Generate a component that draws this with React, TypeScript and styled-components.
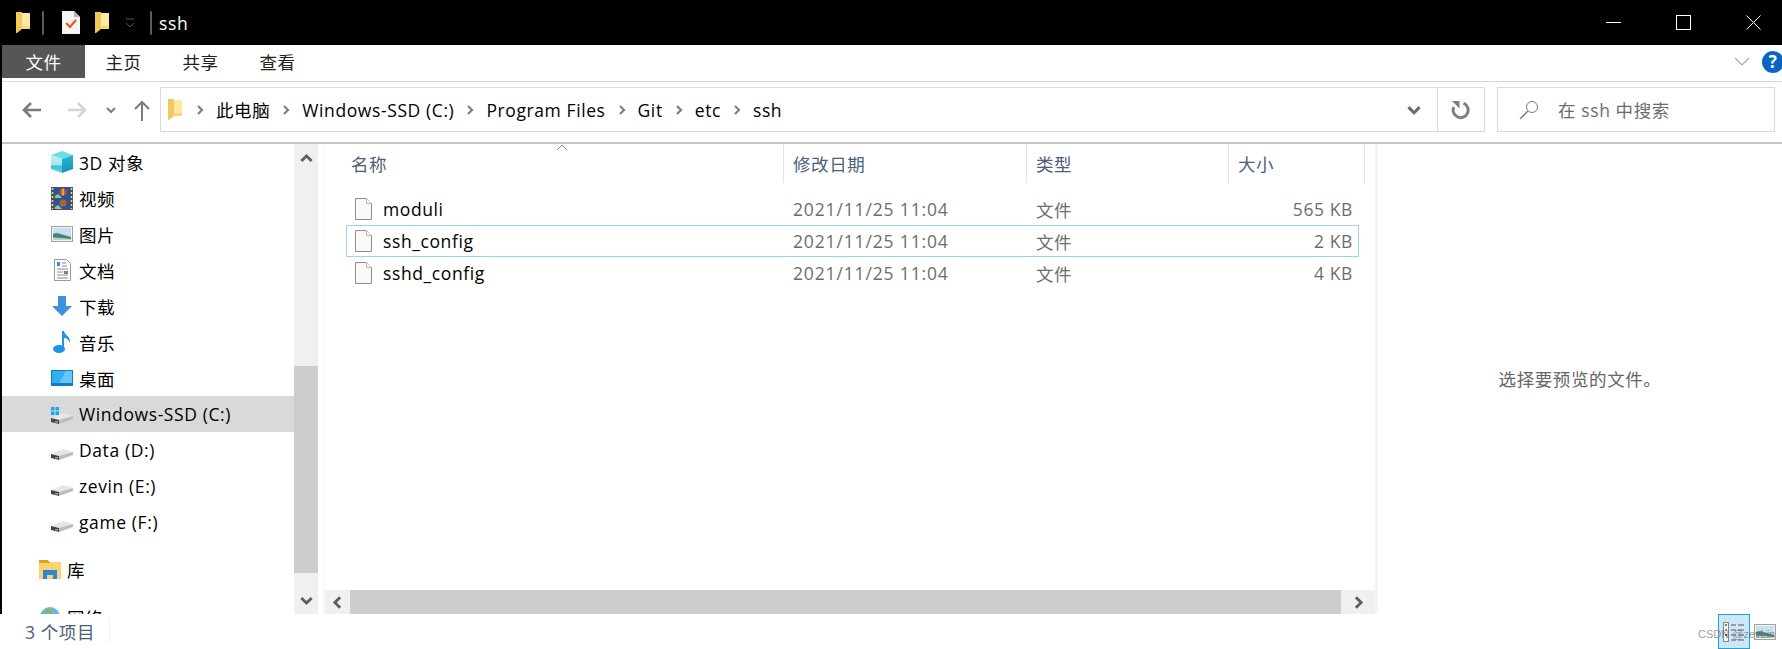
import styled, { createGlobalStyle } from "styled-components";

const GlobalStyle = createGlobalStyle`
  html, body {
    margin: 0;
    padding: 0;
    background: #fff;
    overflow: hidden;
  }
  * {
    box-sizing: border-box;
  }
`;

const Window = styled.div`
  position: relative;
  display: flex;
  flex-direction: column;
  width: 1782px;
  height: 649px;
  overflow: hidden;
  background: #fff;
  color: #000;
  font-family: "Open Sans", "Noto Sans CJK SC", sans-serif;
  font-size: 17.5px;
  letter-spacing: 0.6px;
`;

const TitleBar = styled.div`
  display: flex;
  align-items: center;
  flex: 0 0 45px;
  padding: 0 21px 0 16px;
  background: #000;
  color: #fff;
`;
const QuickAccess = styled.div`
  display: flex;
  align-items: center;
  gap: 8px;
`;
const QuickItem = styled.span<{ $mr: number }>`
  display: flex;
  margin-right: ${(p) => p.$mr}px;
`;
const TitleSep = styled.span<{ $m?: string }>`
  width: 2px;
  height: 24px;
  border-radius: 1px;
  background: #5c5c5c;
  margin: ${(p) => p.$m || "0"};
`;
const TitleText = styled.span`
  margin-left: 7px;
`;
const QuickDropdown = styled.svg`
  margin-left: 6px;
`;
const WindowControls = styled.div`
  display: flex;
  align-items: center;
  gap: 55px;
  margin-left: auto;
`;

const Framed = styled.div`
  display: flex;
  flex-direction: column;
  flex: 1;
  min-height: 0;
  border-left: 2px solid #000;
`;

const RibbonTabs = styled.div`
  display: flex;
  flex: 0 0 37px;
  border-bottom: 1px solid #dadada;
  padding-bottom: 3px;
`;
const Tab = styled.div<{ $file?: boolean }>`
  display: flex;
  align-items: center;
  justify-content: center;
  width: ${(p) => (p.$file ? "83px" : "77px")};
  color: ${(p) => (p.$file ? "#fff" : "#222")};
  background: ${(p) => (p.$file ? "#565656" : "transparent")};
`;
const RibbonEnd = styled.div`
  display: flex;
  align-items: center;
  gap: 12px;
  margin-left: auto;
  margin-right: -2px;
`;

const AddressRow = styled.div`
  display: flex;
  align-items: center;
  flex: 0 0 61px;
  padding: 5px 7px 10px 0;
  border-bottom: 2px solid #c4c4c4;
`;
const NavButtons = styled.div`
  display: flex;
  align-items: center;
  width: 158px;
  padding-left: 19px;
`;
const Spacer = styled.span<{ $w: number }>`
  flex: 0 0 ${(p) => p.$w}px;
`;
const NavArrow = styled.svg<{ $flip?: boolean }>`
  transform: ${(p) => (p.$flip ? "scaleX(-1)" : "none")};
`;
const AddressBox = styled.div`
  display: flex;
  align-items: center;
  width: 1325px;
  height: 45px;
  padding-left: 7px;
  border: 1px solid #d9d9d9;
`;
const Crumbs = styled.div`
  display: flex;
  align-items: center;
  gap: 11px;
  margin-left: 12px;
`;
const Crumb = styled.span`
  display: flex;
  align-items: center;
  gap: 11px;
`;
const AddressTools = styled.div`
  display: flex;
  align-items: center;
  align-self: stretch;
  margin-left: auto;
`;
const ToolCell = styled.div<{ $w: number; $border?: boolean }>`
  display: flex;
  align-items: center;
  justify-content: center;
  width: ${(p) => p.$w}px;
  height: 100%;
  border-left: ${(p) => (p.$border ? "1px solid #d9d9d9" : "none")};
`;
const SearchBox = styled.div`
  display: flex;
  align-items: center;
  gap: 19px;
  width: 278px;
  height: 45px;
  margin-left: 12px;
  padding-left: 21px;
  border: 1px solid #d9d9d9;
  color: #6d6d6d;
`;

const Main = styled.div`
  display: flex;
  flex: 1;
  min-height: 0;
`;

const Sidebar = styled.div`
  flex: 0 0 292px;
  overflow: hidden;
`;
const NavRow = styled.div<{ $selected?: boolean; $top?: boolean; $gap?: number }>`
  display: flex;
  align-items: center;
  gap: 6px;
  height: 36px;
  margin-top: ${(p) => p.$gap || 0}px;
  padding-left: ${(p) => (p.$top ? "37px" : "49px")};
  background: ${(p) => (p.$selected ? "#d9d9d9" : "transparent")};
`;
const IconSlot = styled.span`
  display: flex;
  align-items: center;
  justify-content: center;
  flex: 0 0 22px;
`;

const VScroll = styled.div`
  display: flex;
  flex-direction: column;
  flex: 0 0 24px;
  background: #f0f0f0;
`;
const ScrollEnd = styled.div`
  display: flex;
  align-items: center;
  justify-content: center;
  flex: 0 0 28px;
`;
const VTrack = styled.div`
  flex: 1;
  padding: 194px 0 13px;
`;
const Thumb = styled.div`
  height: 100%;
  background: #cdcdcd;
`;

const ListPane = styled.div`
  display: flex;
  flex-direction: column;
  width: 1056px;
  margin-left: 4px;
  border-left: 3px solid #fafafa;
  border-right: 3px solid #f5f5f5;
`;
const HeaderRow = styled.div`
  display: grid;
  grid-template-columns: 438px 243px 202px 136px;
  flex: 0 0 39px;
  margin-left: 21px;
  margin-bottom: 10px;
  color: #4c607a;
`;
const HeaderCell = styled.div<{ $pad: number }>`
  position: relative;
  display: flex;
  align-items: center;
  padding-left: ${(p) => p.$pad}px;
  border-right: 1px solid #e5e5e5;
`;
const SortArrow = styled.svg`
  position: absolute;
  left: 210px;
  top: 0;
`;
const FileRow = styled.div<{ $selected?: boolean }>`
  display: grid;
  grid-template-columns: 437px 243px 202px 129px;
  align-items: center;
  flex: 0 0 32px;
  width: 1013px;
  margin-left: 21px;
  border: 1px solid ${(p) => (p.$selected ? "#99d1ff" : "transparent")};
  color: #6d6d6d;
`;
const NameCell = styled.div`
  display: flex;
  align-items: center;
  gap: 11px;
  padding-left: 8px;
  color: #000;
`;
const TextCell = styled.div`
  padding-left: 9px;
`;
const DateCell = styled(TextCell)`
  letter-spacing: 0.85px;
`;
const SizeCell = styled.div`
  padding-right: 5px;
  text-align: right;
`;
const HScroll = styled.div`
  display: flex;
  align-items: stretch;
  flex: 0 0 24px;
  margin-top: auto;
  background: #f0f0f0;
`;
const HButton = styled.div<{ $w: number }>`
  display: flex;
  align-items: center;
  justify-content: center;
  flex: 0 0 ${(p) => p.$w}px;
`;
const HThumb = styled.div`
  flex: 1;
  background: #cdcdcd;
`;
const Preview = styled.div`
  display: flex;
  flex: 1;
  align-items: center;
  justify-content: center;
  padding-bottom: 2px;
  color: #666;
`;

const StatusBar = styled.div`
  display: flex;
  align-items: center;
  flex: 0 0 35px;
  padding-left: 25px;
  color: #4c607a;
`;
const StatusCount = styled.span`
  width: 85px;
  border-right: 1px solid #f0f0f0;
`;
const ViewButtons = styled.div`
  display: flex;
  align-items: center;
  gap: 4px;
  margin-left: auto;
  padding-right: 6px;
  height: 100%;
`;
const ViewButton = styled.div<{ $active?: boolean }>`
  display: flex;
  align-items: center;
  justify-content: center;
  width: ${(p) => (p.$active ? "32px" : "22px")};
  height: 100%;
  background: ${(p) => (p.$active ? "#cce8f7" : "transparent")};
  border: ${(p) => (p.$active ? "1px solid #26a0da" : "none")};
`;
const Watermark = styled.div`
  position: absolute;
  left: 1698px;
  top: 628px;
  color: rgba(110, 110, 110, 0.7);
  font-family: "Liberation Sans", sans-serif;
  font-size: 11px;
  letter-spacing: 0;
  white-space: nowrap;
`;

const Folder = () => (
  <svg width="15" height="22" viewBox="0 0 15 22">
    <path d="M5 1h9v16H5z" fill="#fde8a4" />
    <path d="M5 14h9v3H5z" fill="#f8d67c" />
    <path d="M0 0h6v17l-5 4H0z" fill="#f5c65a" />
  </svg>
);
const TaskDoc = () => (
  <svg width="18" height="23" viewBox="0 0 18 23">
    <path d="M0 0h12l6 6v17H0z" fill="#f5f5f5" />
    <path d="M12 0l6 6h-6z" fill="#b5b5b5" />
    <path d="M4 12l4 4 6-7" fill="none" stroke="#e8561e" strokeWidth="2.200" />
  </svg>
);
const chevrons: Record<string, string> = {
  right: "M3 1l4 4-4 4",
  left: "M7 1L3 5l4 4",
  down: "M1 3l4 4 4-4",
  up: "M1 7l4-4 4 4",
};
const Chevron = ({ dir = "right", color = "#808080", size = 10 }: { dir?: string; color?: string; size?: number }) => (
  <svg width={size} height={size} viewBox="0 0 10 10">
    <path d={chevrons[dir]} fill="none" stroke={color} strokeWidth="2.200" />
  </svg>
);
const Arrow = ({ color, flip }: { color: string; flip?: boolean }) => (
  <NavArrow $flip={flip} width="20" height="18" viewBox="0 0 20 18">
    <path d="M20 9H3M10 2L3 9l7 7" fill="none" stroke={color} strokeWidth="2.600" />
  </NavArrow>
);
const FileIcon = () => (
  <svg width="17" height="22" viewBox="0 0 17 22">
    <path d="M.5.5h11l5 5v16H.5z" fill="#f9f9f9" stroke="#8f8f8f" />
    <path d="M11.500.5v5h5" fill="#fff" stroke="#b5b5b5" />
  </svg>
);
const Cube = () => (
  <svg width="22" height="22" viewBox="0 0 22 22">
    <defs>
      <linearGradient id="cubeLeft" x1="0" y1="0" x2="0" y2="1">
        <stop offset="0" stopColor="#c4f0f2" />
        <stop offset="0.55" stopColor="#a5e6ea" />
        <stop offset="0.6" stopColor="#45c0d0" />
        <stop offset="1" stopColor="#5fcfdc" />
      </linearGradient>
      <linearGradient id="cubeRight" x1="0" y1="0" x2="0" y2="1">
        <stop offset="0" stopColor="#28b4d4" />
        <stop offset="1" stopColor="#1493bd" />
      </linearGradient>
    </defs>
    <path d="M11 0l11 4-11 4L0 4z" fill="#6fdde6" />
    <path d="M0 4l11 4v14L0 18z" fill="url(#cubeLeft)" />
    <path d="M11 8l11-4v14l-11 4z" fill="url(#cubeRight)" />
  </svg>
);
const Film = () => (
  <svg width="22" height="23" viewBox="0 0 22 23">
    <rect width="22" height="23" fill="#4e4e4e" />
    <rect x="4" y="1" width="14" height="10" fill="#1f55b0" />
    <rect x="4" y="12" width="14" height="10" fill="#1f55b0" />
    <circle cx="12" cy="5" r="3.500" fill="#d8502a" />
    <path d="M12 1.500v7" stroke="#e8c030" strokeWidth="1.500" />
    <circle cx="12" cy="16" r="3.500" fill="#d8502a" />
    <path d="M12 12.500v7" stroke="#3c9a4c" strokeWidth="1.500" />
    <path d="M4 9l3-2 4 4H4zM4 20l3-2 4 4H4z" fill="#9ec87a" />
    <path d="M1.500 1v21M20.500 1v21" stroke="#d8d8d8" strokeWidth="1.500" strokeDasharray="2 2" />
  </svg>
);
const Picture = () => (
  <svg width="22" height="16" viewBox="0 0 22 16">
    <rect x=".5" y=".5" width="21" height="15" fill="#f4f4f4" stroke="#a0a0a0" />
    <rect x="2" y="2" width="18" height="12" fill="#c4dfee" />
    <path d="M2 8c4-2 9 1 18 3v3H2z" fill="#4f7f73" />
    <path d="M2 11.500c6 0 12 1 18 1.500v1H2z" fill="#b4d2e0" />
  </svg>
);
const DocIcon = () => (
  <svg width="17" height="22" viewBox="0 0 17 22">
    <path d="M.5.5h12l4 4v17H.5z" fill="#fff" stroke="#999" />
    <path d="M8 4h4M8 7h5M3 10h11M3 13h6M3 16h11M3 19h11" stroke="#8c8c8c" />
    <rect x="10" y="12" width="4" height="3" fill="#5a8fa8" />
    <path d="M3 3h3v4H3z" fill="#2f8fe0" />
  </svg>
);
const Download = () => (
  <svg width="20" height="20" viewBox="0 0 20 20">
    <path d="M6 0h8v10h6l-10 10L0 10h6z" fill="#3e90e0" />
  </svg>
);
const Music = () => (
  <svg width="18" height="22" viewBox="0 0 18 22">
    <ellipse cx="6" cy="18" rx="6" ry="4" fill="#1e96e8" />
    <path d="M9 0h2c1 5 7 5 6 12-1-3-3-5-6-5v11H9z" fill="#1e96e8" />
  </svg>
);
const Desktop = () => (
  <svg width="22" height="16" viewBox="0 0 22 16">
    <rect width="22" height="16" fill="#0f7dc2" />
    <path d="M1 1h20v12H1z" fill="#2fb0f4" />
    <path d="M15 1h6v12H8z" fill="#63c7f8" />
  </svg>
);
const Drive = ({ win }: { win?: boolean }) => (
  <svg width="22" height="22" viewBox="0 0 22 22">
    {win && <path d="M0 4h3.500v3.500H0zM4.500 4H8v3.500H4.500zM0 8.500h3.500V12H0zM4.500 8.500H8V12H4.500z" fill="#17a5e6" />}
    <path d="M0 15l12-5 10 3-14 4z" fill="#e6e6e6" />
    <path d="M8 17l14-4v3L8 21z" fill="#bdbdbd" />
    <path d="M0 15l8 2v4l-8-2z" fill="#454545" />
    <rect x="4" y="18" width="3" height="1.500" fill="#5ec46a" />
  </svg>
);
const Library = () => (
  <svg width="22" height="19" viewBox="0 0 22 19">
    <path d="M0 2h22v17H0z" fill="#fbd46f" />
    <path d="M0 0h9l2 3H0z" fill="#e0a21c" />
    <path d="M4 10h14v9h-4v-4H8v4H4z" fill="#2b88d8" />
  </svg>
);
const Globe = () => (
  <svg width="22" height="22" viewBox="0 0 22 22">
    <circle cx="11" cy="11" r="10" fill="#6fb4e8" />
    <path d="M6 4c3-2 7-2 8 0l-2 4-5 1zM13 12l5-1-2 6-3 1z" fill="#7fb86a" />
  </svg>
);
const Help = () => (
  <svg width="22" height="22" viewBox="0 0 22 22">
    <circle cx="11" cy="11" r="11" fill="#0a64c4" />
    <text x="11" y="17" textAnchor="middle" fontSize="17" fontWeight="700" fontFamily="Open Sans" fill="#fff">?</text>
  </svg>
);
const DetailsIcon = () => (
  <svg width="22" height="20" viewBox="0 0 22 20">
    <rect x=".5" y=".5" width="5" height="19" fill="#f5f5f5" stroke="#888" />
    <rect x="2" y="2" width="2" height="2" fill="#3a8aa8" />
    <rect x="2" y="7" width="2" height="2" fill="#a08a30" />
    <rect x="2" y="12" width="2" height="2" fill="#8a3020" />
    <path d="M8 3h5M15 3h6M8 8h5M15 8h6M8 13h5M15 13h6M8 18h5M15 18h6" stroke="#555" />
  </svg>
);

const navItems = [
  { label: "3D 对象", icon: <Cube /> },
  { label: "视频", icon: <Film /> },
  { label: "图片", icon: <Picture /> },
  { label: "文档", icon: <DocIcon /> },
  { label: "下载", icon: <Download /> },
  { label: "音乐", icon: <Music /> },
  { label: "桌面", icon: <Desktop /> },
  { label: "Windows-SSD (C:)", icon: <Drive win />, selected: true },
  { label: "Data (D:)", icon: <Drive /> },
  { label: "zevin (E:)", icon: <Drive /> },
  { label: "game (F:)", icon: <Drive /> },
];
const crumbs = ["此电脑", "Windows-SSD (C:)", "Program Files", "Git", "etc", "ssh"];
const files = [
  { name: "moduli", size: "565 KB" },
  { name: "ssh_config", size: "2 KB", selected: true },
  { name: "sshd_config", size: "4 KB" },
];

export default function App() {
  return (
    <Window>
      <GlobalStyle />
      <TitleBar>
        <QuickAccess>
          <Folder />
          <TitleSep $m="0 10px 0 3px" />
          <QuickItem $mr={7}>
            <TaskDoc />
          </QuickItem>
          <Folder />
          <QuickDropdown width="12" height="12" viewBox="0 0 12 12">
            <path d="M2 2h8M2 6l4 4 4-4" fill="none" stroke="#555" />
          </QuickDropdown>
        </QuickAccess>
        <TitleSep $m="0 0 0 14px" />
        <TitleText>ssh</TitleText>
        <WindowControls>
          <svg width="15" height="15" viewBox="0 0 15 15">
            <path d="M0 7.500h15" stroke="#fff" />
          </svg>
          <svg width="15" height="15" viewBox="0 0 15 15">
            <rect x=".5" y=".5" width="14" height="14" fill="none" stroke="#fff" />
          </svg>
          <svg width="15" height="15" viewBox="0 0 15 15">
            <path d="M.5.5l14 14M14.500.5l-14 14" stroke="#fff" />
          </svg>
        </WindowControls>
      </TitleBar>
      <Framed>
        <RibbonTabs>
          <Tab $file>文件</Tab>
          <Tab>主页</Tab>
          <Tab>共享</Tab>
          <Tab>查看</Tab>
          <RibbonEnd>
            <svg width="16" height="10" viewBox="0 0 16 10">
              <path d="M1 1l7 7 7-7" fill="none" stroke="#a8a8a8" strokeWidth="1.200" />
            </svg>
            <Help />
          </RibbonEnd>
        </RibbonTabs>
        <AddressRow>
          <NavButtons>
            <Arrow color="#7a7a7a" />
            <Spacer $w={27} />
            <Arrow color="#d5d5d5" flip />
            <Spacer $w={18} />
            <Chevron dir="down" />
            <Spacer $w={17} />
            <svg width="18" height="22" viewBox="0 0 18 22">
              <path d="M9 22V3M2 10l7-7 7 7" fill="none" stroke="#7a7a7a" strokeWidth="2" />
            </svg>
          </NavButtons>
          <AddressBox>
            <Folder />
            <Crumbs>
              {crumbs.map((c) => (
                <Crumb key={c}>
                  <Chevron />
                  {c}
                </Crumb>
              ))}
            </Crumbs>
            <AddressTools>
              <ToolCell $w={46}>
                <Chevron dir="down" color="#6d6d6d" size={14} />
              </ToolCell>
              <ToolCell $w={47} $border>
                <svg width="20" height="20" viewBox="0 0 20 20">
                  <path d="M12.500 3.200A7.500 7.500 0 1 1 2.800 7" fill="none" stroke="#7f7f7f" strokeWidth="3" />
                  <path d="M1 1h7.500v7.500z" fill="#7f7f7f" />
                </svg>
              </ToolCell>
            </AddressTools>
          </AddressBox>
          <SearchBox>
            <svg width="20" height="20" viewBox="0 0 20 20">
              <circle cx="13" cy="7" r="5.500" fill="none" stroke="#7a7a7a" />
              <path d="M9 11l-8 8" stroke="#7a7a7a" strokeWidth="1.300" />
            </svg>
            在 ssh 中搜索
          </SearchBox>
        </AddressRow>
        <Main>
          <Sidebar>
            {navItems.map((n) => (
              <NavRow key={n.label} $selected={n.selected}>
                <IconSlot>{n.icon}</IconSlot>
                {n.label}
              </NavRow>
            ))}
            <NavRow $top $gap={11}>
              <IconSlot>
                <Library />
              </IconSlot>
              库
            </NavRow>
            <NavRow $top $gap={12}>
              <IconSlot>
                <Globe />
              </IconSlot>
              网络
            </NavRow>
          </Sidebar>
          <VScroll>
            <ScrollEnd>
              <Chevron dir="up" color="#606060" size={13} />
            </ScrollEnd>
            <VTrack>
              <Thumb />
            </VTrack>
            <ScrollEnd>
              <Chevron dir="down" color="#606060" size={13} />
            </ScrollEnd>
          </VScroll>
          <ListPane>
            <HeaderRow>
              <HeaderCell $pad={5}>
                名称
                <SortArrow width="12" height="7" viewBox="0 0 12 7">
                  <path d="M1 6l5-5 5 5" fill="none" stroke="#8a8a8a" />
                </SortArrow>
              </HeaderCell>
              <HeaderCell $pad={9}>修改日期</HeaderCell>
              <HeaderCell $pad={9}>类型</HeaderCell>
              <HeaderCell $pad={9}>大小</HeaderCell>
            </HeaderRow>
            {files.map((f) => (
              <FileRow key={f.name} $selected={f.selected}>
                <NameCell>
                  <FileIcon />
                  {f.name}
                </NameCell>
                <DateCell>2021/11/25 11:04</DateCell>
                <TextCell>文件</TextCell>
                <SizeCell>{f.size}</SizeCell>
              </FileRow>
            ))}
            <HScroll>
              <HButton $w={25}>
                <Chevron dir="left" color="#606060" size={13} />
              </HButton>
              <HThumb />
              <HButton $w={34}>
                <Chevron color="#606060" size={13} />
              </HButton>
            </HScroll>
          </ListPane>
          <Preview>选择要预览的文件。</Preview>
        </Main>
      </Framed>
      <StatusBar>
        <StatusCount>3 个项目</StatusCount>
        <ViewButtons>
          <ViewButton $active>
            <DetailsIcon />
          </ViewButton>
          <ViewButton>
            <Picture />
          </ViewButton>
        </ViewButtons>
      </StatusBar>
      <Watermark>CSDN @zevLin</Watermark>
    </Window>
  );
}
